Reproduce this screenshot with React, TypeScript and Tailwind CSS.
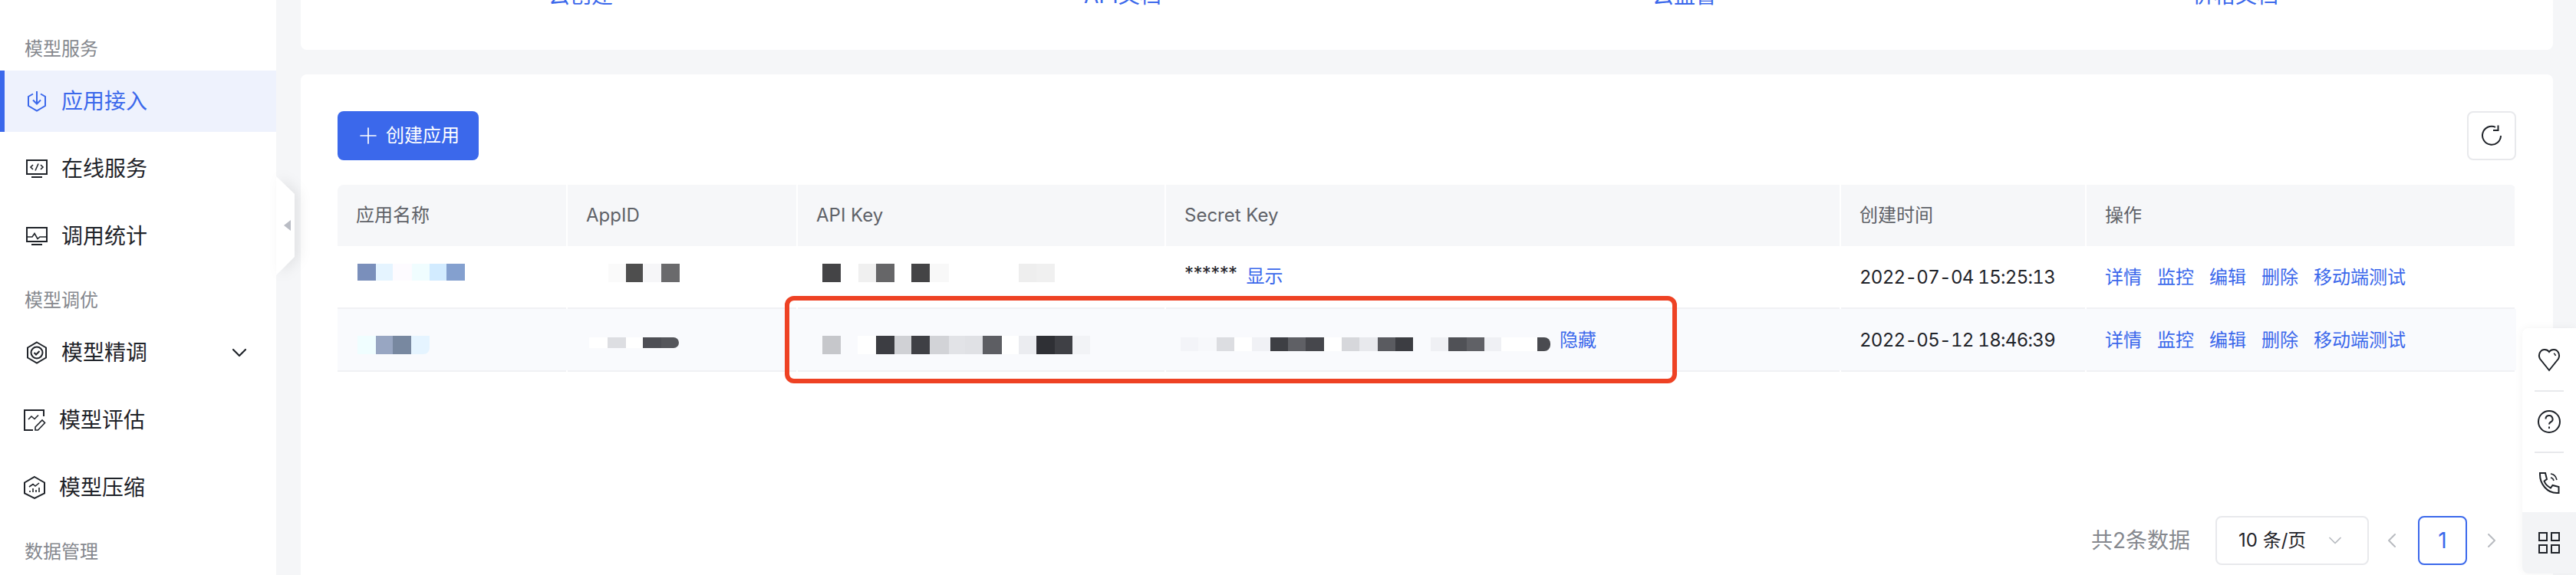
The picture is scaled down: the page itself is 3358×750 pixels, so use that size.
import { ChevronDown, ChevronLeft, ChevronRight, Plus } from "lucide-react";

type Block = [number, string];

const sideText = "text-[28px] leading-[40px] text-[#1f2329]";
const rowCell =
  "relative flex items-center h-[82px] border-b-2 border-[#f0f1f4] after:absolute after:right-0 after:bottom-[-2px] after:w-[2px] after:h-[2px] after:bg-white";
const timeCell = "pl-6 pt-0.5 text-2xl tabular-nums tracking-[-0.7px] text-[#1f2329]";

function Mosaic({ blocks, className }: { blocks: Block[]; className: string }) {
  return (
    <div className={`flex ${className}`}>
      {blocks.map(([width, color], i) => (
        <div key={i} style={{ width, backgroundColor: color }} />
      ))}
    </div>
  );
}

function NavIcon({ children, blue }: { children: React.ReactNode; blue?: boolean }) {
  return (
    <svg
      viewBox="0 0 32 32"
      className={`w-8 h-8 shrink-0 ${blue ? "text-[#3b68eb]" : "text-[#1f2329]"}`}
      fill="none"
      stroke="currentColor"
      strokeWidth="2"
    >
      {children}
    </svg>
  );
}

function NavItem({
  label,
  icon,
  active,
  tight,
  arrow,
}: {
  label: string;
  icon: React.ReactNode;
  active?: boolean;
  tight?: boolean;
  arrow?: boolean;
}) {
  return (
    <div
      className={`flex items-center h-20 mb-2 gap-4 ${tight ? "pl-[29px]" : "pl-8"} ${
        active ? "bg-[#eef2fd] border-l-[6px] border-[#3b68eb] !pl-[26px]" : ""
      }`}
    >
      {icon}
      <span className={active ? "text-[28px] leading-[40px] text-[#3b68eb]" : sideText}>{label}</span>
      {arrow && <ChevronDown className="ml-auto mr-[32px] w-8 h-8 text-[#1f2329]" strokeWidth={1.6} />}
    </div>
  );
}

function SectionLabel({ children }: { children: React.ReactNode }) {
  return <div className="flex items-center h-14 pl-8 text-2xl text-[#85888e]">{children}</div>;
}

function Actions() {
  return (
    <div className="flex gap-5 pl-6 pt-0.5 text-2xl text-[#3b68eb]">
      <span>详情</span>
      <span>监控</span>
      <span>编辑</span>
      <span>删除</span>
      <span>移动端测试</span>
    </div>
  );
}

export default function App() {
  return (
    <div className="relative flex w-[3358px] h-[750px] overflow-hidden bg-[#f5f6f8] font-[Inter,'Noto_Sans_CJK_SC',sans-serif]">
      <aside className="w-[360px] shrink-0 bg-white pt-9">
        <SectionLabel>模型服务</SectionLabel>
        <NavItem
          active
          label="应用接入"
          icon={
            <NavIcon blue>
              <path d="M11 6.500 5 10v12l11 6.500 11-6.500V10l-6-3.500" />
              <path d="M16 3v16M11 14.500l5 5 5-5" />
            </NavIcon>
          }
        />
        <NavItem
          label="在线服务"
          icon={
            <NavIcon>
              <path d="M3 5h26v18H3zM9 27h14" />
              <path d="M11 11l-3 3 3 3M21 11l3 3-3 3M18 9.500l-4 9" strokeWidth="1.600" />
            </NavIcon>
          }
        />
        <NavItem
          label="调用统计"
          icon={
            <NavIcon>
              <path d="M3 5h26v18H3zM9 27h14" />
              <path d="M3 17h7l3-4.500 4 7 3-2.500h9" strokeWidth="1.600" />
            </NavIcon>
          }
        />
        <div className="h-2" />
        <SectionLabel>模型调优</SectionLabel>
        <NavItem
          label="模型精调"
          arrow
          icon={
            <NavIcon>
              <path d="M16 2.500 28 9.500v13l-12 7-12-7v-13z" />
              <circle cx="16" cy="16" r="7.500" />
              <path d="M12.500 16l2.500 2.500 4.500-4.500" />
            </NavIcon>
          }
        />
        <NavItem
          tight
          label="模型评估"
          icon={
            <NavIcon>
              <path d="M14 29H3V3h25v8" />
              <path d="M8 15l4-4 4 3.500 5-5" strokeWidth="1.600" />
              <path d="M17 29v-4l9-9 3.500 3.500-9 9.500z" strokeWidth="1.600" />
            </NavIcon>
          }
        />
        <NavItem
          tight
          label="模型压缩"
          icon={
            <NavIcon>
              <path d="M16 2 29 9.500v14L16 30 3 23.500v-14z" />
              <path d="M10 22v-2M14 22v-5M18 22v-3M22 22v-6M9 15l5-3.500 3 2.500 5-4" strokeWidth="1.600" />
            </NavIcon>
          }
        />
        <div className="h-2" />
        <SectionLabel>数据管理</SectionLabel>
      </aside>

      <main className="flex-1 flex flex-col pl-8 pr-[30px]">
        <div className="flex items-end h-[65px] shrink-0 mb-8 pl-[323px] pb-[51px] rounded-b-lg bg-white">
          <div className="grid grid-cols-[698px_741px_704px_auto] text-[28px] leading-[40px] text-[#3b68eb] whitespace-nowrap">
            <span>云创建</span>
            <span>API文档</span>
            <span>云监督</span>
            <span>价格文档</span>
          </div>
        </div>

        <section className="flex-1 rounded-t-lg bg-white px-12 pt-12">
          <div className="flex justify-between mb-8">
            <button className="flex items-center gap-[6px] w-[184px] h-16 pl-[23px] rounded-lg bg-[#3b68eb] text-2xl text-white">
              <Plus className="w-[34px] h-[34px]" strokeWidth={1.2} />
              创建应用
            </button>
            <button className="flex items-center justify-center w-16 h-16 rounded-lg border-2 border-[#e8e9ec]">
              <svg viewBox="0 0 28 28" className="w-7 h-7 text-[#1f2329]" fill="none" stroke="currentColor" strokeWidth="2">
                <path d="M19 2.800A12 12 0 1 0 26 14" />
                <path d="M22.500.5V7H16" />
              </svg>
            </button>
          </div>

          <div className="grid grid-cols-[300px_300px_480px_880px_320px_560px] rounded-t-lg overflow-hidden">
            {["应用名称", "AppID", "API Key", "Secret Key", "创建时间", "操作"].map((title) => (
              <div
                key={title}
                className="flex items-center h-20 px-6 bg-[#f6f7f9] border-r-2 border-white last:border-r-0 text-2xl text-[#5f6268]"
              >
                {title}
              </div>
            ))}

            <div className={rowCell}>
              <Mosaic
                className="ml-[26px] h-[22px] -mt-[12px]"
                blocks={[
                  [24, "#7a8fbb"],
                  [22, "#e5f4ff"],
                  [25, "#fdfbff"],
                  [23, "#f0fdff"],
                  [22, "#d2ebff"],
                  [24, "#84a0cf"],
                ]}
              />
            </div>
            <div className={rowCell}>
              <Mosaic
                className="ml-[53px] h-6 -mt-[11px]"
                blocks={[
                  [23, "#fafafa"],
                  [22, "#4e4e4e"],
                  [24, "#f6f6f8"],
                  [24, "#6a6a6c"],
                ]}
              />
            </div>
            <div className={rowCell}>
              <Mosaic
                className="ml-[32px] h-6 -mt-[11px]"
                blocks={[
                  [24, "#444446"],
                  [23, "#ffffff"],
                  [23, "#f0f0f0"],
                  [24, "#666668"],
                  [22, "#ffffff"],
                  [24, "#444446"],
                  [25, "#f8f8f8"],
                  [91, "#ffffff"],
                  [23, "#eeeeee"],
                  [24, "#f0f0f0"],
                ]}
              />
            </div>
            <div className={`${rowCell} pl-6 text-2xl text-[#1f2329]`}>
              <span className="tracking-[-0.6px] -mt-2">******</span>
              <span className="ml-3 text-[#3b68eb]">显示</span>
            </div>
            <div className={`${rowCell} ${timeCell}`}>2022-07-04 15:25:13</div>
            <div className={rowCell}>
              <Actions />
            </div>

            <div className={`${rowCell} bg-[#f9fafd]`}>
              <Mosaic
                className="ml-[26px] h-6 mt-[14px] [&>div:last-child]:rounded-br-lg"
                blocks={[
                  [24, "#f0feff"],
                  [22, "#98a6c2"],
                  [24, "#7888a0"],
                  [24, "#e5f4ff"],
                ]}
              />
            </div>
            <div className={`${rowCell} bg-[#f9fafd]`}>
              <Mosaic
                className="ml-[28px] h-3.5 mt-[7px] [&>div:last-child]:rounded-r-lg"
                blocks={[
                  [24, "#ffffff"],
                  [24, "#dddee2"],
                  [22, "#ffffff"],
                  [24, "#4e4f55"],
                  [23, "#55565b"],
                ]}
              />
            </div>
            <div className={`${rowCell} bg-[#f9fafd]`}>
              <Mosaic
                className="ml-[32px] h-6 mt-[14px]"
                blocks={[
                  [24, "#c6c7cb"],
                  [22, "#f9fafd"],
                  [24, "#ffffff"],
                  [24, "#3c3d42"],
                  [22, "#d0d1d5"],
                  [24, "#3f4045"],
                  [25, "#d2d3d7"],
                  [21, "#e2e3e7"],
                  [23, "#e0e1e5"],
                  [25, "#5d5e63"],
                  [22, "#ffffff"],
                  [23, "#ebecf0"],
                  [24, "#2f3035"],
                  [23, "#3f4045"],
                  [23, "#f2f3f6"],
                ]}
              />
            </div>
            <div className={`${rowCell} bg-[#f9fafd] text-2xl text-[#3b68eb]`}>
              <Mosaic
                className="ml-[19px] h-[18px] mt-[12px] [&>div:last-child]:rounded-r-lg"
                blocks={[
                  [23, "#f3f4f8"],
                  [24, "#f7f8fb"],
                  [23, "#dcdde1"],
                  [23, "#ffffff"],
                  [24, "#f0f1f5"],
                  [23, "#3e3f44"],
                  [23, "#5f6065"],
                  [24, "#46474c"],
                  [23, "#ffffff"],
                  [23, "#d6d7db"],
                  [24, "#e8e9ed"],
                  [23, "#5a5b60"],
                  [23, "#3c3d42"],
                  [23, "#f9fafd"],
                  [23, "#eff0f4"],
                  [24, "#505156"],
                  [23, "#606166"],
                  [22, "#eff0f4"],
                  [47, "#ffffff"],
                  [17, "#4a4b50"],
                ]}
              />
              <span className="ml-3 pt-0.5">隐藏</span>
            </div>
            <div className={`${rowCell} bg-[#f9fafd] ${timeCell}`}>2022-05-12 18:46:39</div>
            <div className={`${rowCell} bg-[#f9fafd]`}>
              <Actions />
            </div>
          </div>

          <div className="flex items-center justify-end h-16 mt-[188px] pr-4">
            <span className="text-[28px] text-[#85888e] mr-[33px]">共2条数据</span>
            <div className="flex items-center w-[200px] h-16 pl-7 pr-[28px] rounded-lg border-2 border-[#e8e9ec] text-2xl text-[#1f2329]">
              10 条/页
              <ChevronDown className="ml-auto w-7 h-7 text-[#b8bbc0]" strokeWidth={1.5} />
            </div>
            <ChevronLeft className="ml-3.5 w-8 h-8 text-[#b8bbc0]" strokeWidth={1.5} />
            <div className="flex items-center justify-center w-16 h-16 ml-[18px] rounded-lg border-2 border-[#3b68eb] text-[28px] text-[#3b68eb]">
              1
            </div>
            <ChevronRight className="ml-4 w-8 h-8 text-[#b8bbc0]" strokeWidth={1.5} />
          </div>
        </section>
      </main>

      {/* sidebar collapse handle */}
      <svg viewBox="0 0 44 130" className="absolute left-[360px] top-[230px] w-[44px] h-[130px] drop-shadow-[6px_0_8px_rgba(0,0,0,0.08)]">
        <path d="M0 0 24 23V105L0 129z" fill="#fff" />
        <path d="M10 64 19 57V71z" fill="#b9bcc4" />
      </svg>

      {/* annotation box */}
      <div className="absolute left-[1023px] top-[386px] w-[1163px] h-[114px] rounded-xl border-[6px] border-[#ee4224]" />

      {/* floating tools */}
      <div className="absolute right-0 top-[428px] w-[70px] h-[320px] flex flex-col rounded-l-lg bg-white shadow-[0_0_12px_rgba(0,0,0,0.05)] overflow-hidden">
        <div className="flex items-center justify-center h-[81px]">
          <svg viewBox="0 0 32 32" className="w-8 h-8 text-[#1f2329]" fill="none" stroke="currentColor" strokeWidth="2">
            <path d="M16 30 4 15C1 9 5 3 10 3c3 0 5 1.500 6 3 1-1.500 3-3 6-3 5 0 9 6 6 12z" />
            <path d="M22 8c1.500.5 2 1.500 2.500 3" strokeWidth="1.600" />
          </svg>
        </div>
        <div className="mx-4 h-0.5 shrink-0 bg-[#e8e9ec]" />
        <div className="flex items-center justify-center h-[78px]">
          <svg viewBox="0 0 32 32" className="w-8 h-8 text-[#1f2329]" fill="none" stroke="currentColor" strokeWidth="2">
            <circle cx="16" cy="16" r="14" />
            <path d="M11.500 12.500a4.500 4.500 0 1 1 6.500 4c-1.500.8-2 1.500-2 3" />
            <path d="M16 22.500v2.500" />
          </svg>
        </div>
        <div className="mx-4 h-0.5 shrink-0 bg-[#e8e9ec]" />
        <div className="flex items-center justify-center h-[77px]">
          <svg viewBox="0 0 32 32" className="w-8 h-8 text-[#1f2329]" fill="none" stroke="currentColor" strokeWidth="2">
            <path d="M4 3h7l2 8-3.500 2.500c1.500 4 4.500 7 8.500 9L20.500 19l8 2v8H26C13 29 4 17 4 5z" />
            <path d="M18 4c4 .5 7 3.500 8 8M18 9c2 .3 3.500 1.800 4 4" strokeWidth="1.600" />
          </svg>
        </div>
        <div className="flex-1 flex items-center justify-center bg-[#f3f4f6]">
          <svg viewBox="0 0 28 28" className="w-7 h-7 text-[#1f2329]" fill="none" stroke="currentColor" strokeWidth="2">
            <path d="M1 1h10v10H1zM17 1h10v10H17zM1 17h10v10H1zM17 17h10v10H17z" />
          </svg>
        </div>
      </div>
    </div>
  );
}
